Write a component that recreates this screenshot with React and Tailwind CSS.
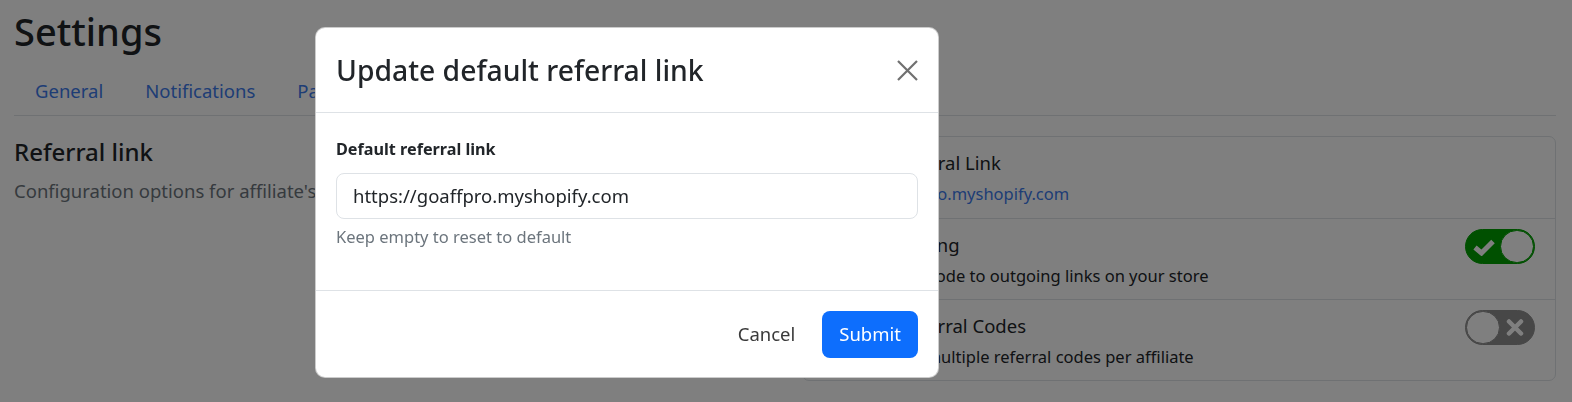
const tabs = ['General', 'Notifications', 'Payments', 'Emails', 'Advanced'];

const settingsRows = [
  { title: 'Default Referral Link', link: 'https://goaffpro.myshopify.com' },
  { title: 'Link Decorating', desc: 'Adds referral code to outgoing links on your store', toggle: true },
  { title: 'Multiple Referral Codes', desc: 'Allow having multiple referral codes per affiliate', toggle: false }
];

function Toggle({ on }) {
  if (on) {
    return (
      <div className="flex h-[35px] w-[70px] shrink-0 items-center rounded-full border border-[#00a000] bg-[#00a000] pl-[6px]">
        <svg width="24" height="18" viewBox="0 0 24 18" fill="none">
          <path d="M3 9.5 L9.5 15 L21 3.5" stroke="white" strokeWidth="5" strokeLinejoin="miter" />
        </svg>
        <div className="ml-auto h-[33px] w-[34px] rounded-full border border-[#00a000] bg-white" />
      </div>
    );
  }
  return (
    <div className="flex h-[35px] w-[70px] shrink-0 items-center rounded-full border border-[#8e8e8e] bg-[#8e8e8e] pr-[10px]">
      <div className="h-[33px] w-[34px] rounded-full border border-[#8a8a8a] bg-white" />
      <svg className="ml-auto" width="18" height="17" viewBox="0 0 18 17" fill="none">
        <path d="M3 2.5 L15 14.5 M15 2.5 L3 14.5" stroke="white" strokeWidth="4.5" strokeLinecap="round" />
      </svg>
    </div>
  );
}

export default function App() {
  return (
    <div className="relative min-h-screen bg-white font-['Noto_Sans',sans-serif] text-[#212529]">
      {/* Page */}
      <div className="pl-[14px] pr-[16px] pt-[8px]">
        <h1 className="mb-[13px] text-[38px] font-medium leading-[46px]">Settings</h1>

        <nav className="flex border-b border-[#dee2e6]">
          {tabs.map((tab) => (
            <span key={tab} className="px-[21px] py-[10px] text-[18.5px] leading-[28px] text-[#3d7aeb]">
              {tab}
            </span>
          ))}
        </nav>

        <div className="mt-[20px] flex">
          <div className="w-[788px] shrink-0">
            <h4 className="mt-[1px] text-[24px] font-medium leading-[29px]">Referral link</h4>
            <p className="mt-[11px] text-[18.5px] leading-[28px] text-[#6c757d]">
              Configuration options for affiliate's referral link and link tracking
            </p>
          </div>

          <div className="flex-1 rounded-[7px] border border-[#dee2e6]">
            {settingsRows.map((row, i) => (
              <div
                key={row.title}
                className={`flex h-[81px] items-start px-[20px] pt-[10px] ${i > 0 ? 'border-t border-[#dee2e6]' : ''}`}
              >
                <div className="flex-1 pt-[3px]">
                  <div className="text-[18.5px] leading-[26px]">{row.title}</div>
                  {row.link ? (
                    <div className="mt-[6px] text-[16.5px] leading-[24px] text-[#3d7aeb]">{row.link}</div>
                  ) : (
                    <div className="mt-[6px] text-[16.5px] leading-[24px]">{row.desc}</div>
                  )}
                </div>
                {row.toggle !== undefined && <Toggle on={row.toggle} />}
              </div>
            ))}
          </div>
        </div>
      </div>

      {/* Backdrop */}
      <div className="fixed inset-0 bg-black/50" />

      {/* Modal */}
      <div className="absolute left-[315px] top-[27px] w-[624px] rounded-[10px] border border-black/20 bg-white">
        <div className="flex h-[85px] items-center justify-between border-b border-[#dee2e6] px-[20px]">
          <h5 className="text-[28.3px] font-medium leading-[34px]">Update default referral link</h5>
          <svg width="21" height="21" viewBox="0 0 21 21" fill="none">
            <path d="M1 1 L20 20 M20 1 L1 20" stroke="#707070" strokeWidth="2.2" />
          </svg>
        </div>

        <div className="px-[20px] pb-[41px] pt-[24px]">
          <label className="block text-[16.2px] font-bold leading-[24px]">Default referral link</label>
          <div className="mt-[12px] flex h-[46px] items-center rounded-[8px] border border-[#dee2e6] px-[16px] text-[18.5px]">
            https://goaffpro.myshopify.com
          </div>
          <div className="mt-[6px] text-[16.5px] leading-[24px] text-[#6c757d]">Keep empty to reset to default</div>
        </div>

        <div className="flex h-[87px] items-center justify-end gap-[12px] border-t border-[#dee2e6] px-[20px]">
          <button className="px-[15px] text-[18.5px] text-[#3a3a3a]">Cancel</button>
          <button className="h-[47px] rounded-[8px] bg-[#0d6efd] px-[17px] text-[18.5px] text-white">Submit</button>
        </div>
      </div>
    </div>
  );
}
